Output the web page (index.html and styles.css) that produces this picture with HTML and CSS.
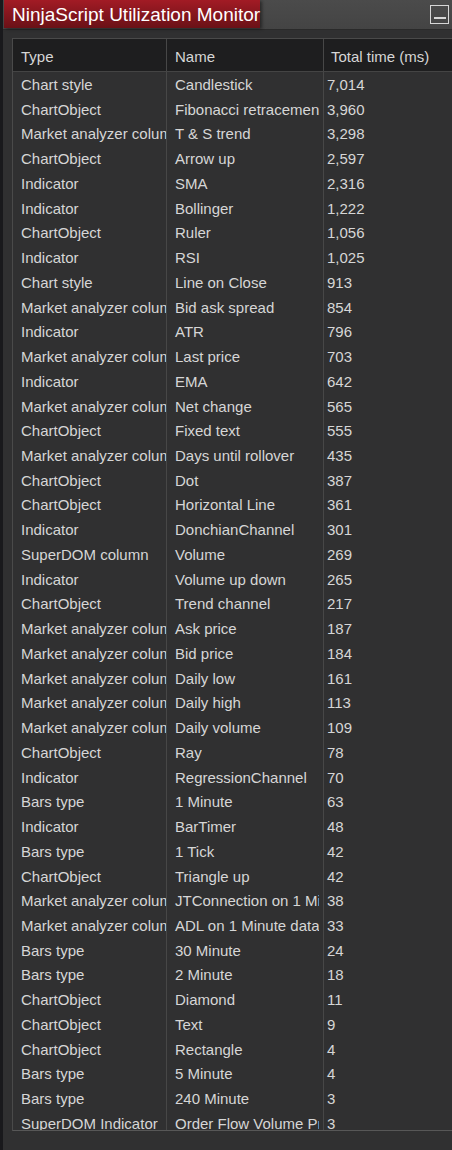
FILE: index.html
```html
<!DOCTYPE html>
<html>
<head>
<meta charset="utf-8">
<link rel="stylesheet" href="styles.css">
</head>
<body>
<div class="window">
  <div class="titlebar">
    <div class="title-tab">NinjaScript Utilization Monitor</div>
    <div class="min-btn"><span class="min-line"></span></div>
  </div>
  <div class="content">
    <div class="grid">
      <div class="row head">
        <div class="cell c1">Type</div>
        <div class="cell c2">Name</div>
        <div class="cell c3">Total time (ms)</div>
      </div>
      <div class="rows">
        <div class="row"><div class="cell c1">Chart style</div><div class="cell c2">Candlestick</div><div class="cell c3">7,014</div></div>
        <div class="row"><div class="cell c1">ChartObject</div><div class="cell c2">Fibonacci retracements</div><div class="cell c3">3,960</div></div>
        <div class="row"><div class="cell c1">Market analyzer column</div><div class="cell c2">T &amp; S trend</div><div class="cell c3">3,298</div></div>
        <div class="row"><div class="cell c1">ChartObject</div><div class="cell c2">Arrow up</div><div class="cell c3">2,597</div></div>
        <div class="row"><div class="cell c1">Indicator</div><div class="cell c2">SMA</div><div class="cell c3">2,316</div></div>
        <div class="row"><div class="cell c1">Indicator</div><div class="cell c2">Bollinger</div><div class="cell c3">1,222</div></div>
        <div class="row"><div class="cell c1">ChartObject</div><div class="cell c2">Ruler</div><div class="cell c3">1,056</div></div>
        <div class="row"><div class="cell c1">Indicator</div><div class="cell c2">RSI</div><div class="cell c3">1,025</div></div>
        <div class="row"><div class="cell c1">Chart style</div><div class="cell c2">Line on Close</div><div class="cell c3">913</div></div>
        <div class="row"><div class="cell c1">Market analyzer column</div><div class="cell c2">Bid ask spread</div><div class="cell c3">854</div></div>
        <div class="row"><div class="cell c1">Indicator</div><div class="cell c2">ATR</div><div class="cell c3">796</div></div>
        <div class="row"><div class="cell c1">Market analyzer column</div><div class="cell c2">Last price</div><div class="cell c3">703</div></div>
        <div class="row"><div class="cell c1">Indicator</div><div class="cell c2">EMA</div><div class="cell c3">642</div></div>
        <div class="row"><div class="cell c1">Market analyzer column</div><div class="cell c2">Net change</div><div class="cell c3">565</div></div>
        <div class="row"><div class="cell c1">ChartObject</div><div class="cell c2">Fixed text</div><div class="cell c3">555</div></div>
        <div class="row"><div class="cell c1">Market analyzer column</div><div class="cell c2">Days until rollover</div><div class="cell c3">435</div></div>
        <div class="row"><div class="cell c1">ChartObject</div><div class="cell c2">Dot</div><div class="cell c3">387</div></div>
        <div class="row"><div class="cell c1">ChartObject</div><div class="cell c2">Horizontal Line</div><div class="cell c3">361</div></div>
        <div class="row"><div class="cell c1">Indicator</div><div class="cell c2">DonchianChannel</div><div class="cell c3">301</div></div>
        <div class="row"><div class="cell c1">SuperDOM column</div><div class="cell c2">Volume</div><div class="cell c3">269</div></div>
        <div class="row"><div class="cell c1">Indicator</div><div class="cell c2">Volume up down</div><div class="cell c3">265</div></div>
        <div class="row"><div class="cell c1">ChartObject</div><div class="cell c2">Trend channel</div><div class="cell c3">217</div></div>
        <div class="row"><div class="cell c1">Market analyzer column</div><div class="cell c2">Ask price</div><div class="cell c3">187</div></div>
        <div class="row"><div class="cell c1">Market analyzer column</div><div class="cell c2">Bid price</div><div class="cell c3">184</div></div>
        <div class="row"><div class="cell c1">Market analyzer column</div><div class="cell c2">Daily low</div><div class="cell c3">161</div></div>
        <div class="row"><div class="cell c1">Market analyzer column</div><div class="cell c2">Daily high</div><div class="cell c3">113</div></div>
        <div class="row"><div class="cell c1">Market analyzer column</div><div class="cell c2">Daily volume</div><div class="cell c3">109</div></div>
        <div class="row"><div class="cell c1">ChartObject</div><div class="cell c2">Ray</div><div class="cell c3">78</div></div>
        <div class="row"><div class="cell c1">Indicator</div><div class="cell c2">RegressionChannel</div><div class="cell c3">70</div></div>
        <div class="row"><div class="cell c1">Bars type</div><div class="cell c2">1 Minute</div><div class="cell c3">63</div></div>
        <div class="row"><div class="cell c1">Indicator</div><div class="cell c2">BarTimer</div><div class="cell c3">48</div></div>
        <div class="row"><div class="cell c1">Bars type</div><div class="cell c2">1 Tick</div><div class="cell c3">42</div></div>
        <div class="row"><div class="cell c1">ChartObject</div><div class="cell c2">Triangle up</div><div class="cell c3">42</div></div>
        <div class="row"><div class="cell c1">Market analyzer column</div><div class="cell c2">JTConnection on 1 Minute data</div><div class="cell c3">38</div></div>
        <div class="row"><div class="cell c1">Market analyzer column</div><div class="cell c2">ADL on 1 Minute data</div><div class="cell c3">33</div></div>
        <div class="row"><div class="cell c1">Bars type</div><div class="cell c2">30 Minute</div><div class="cell c3">24</div></div>
        <div class="row"><div class="cell c1">Bars type</div><div class="cell c2">2 Minute</div><div class="cell c3">18</div></div>
        <div class="row"><div class="cell c1">ChartObject</div><div class="cell c2">Diamond</div><div class="cell c3">11</div></div>
        <div class="row"><div class="cell c1">ChartObject</div><div class="cell c2">Text</div><div class="cell c3">9</div></div>
        <div class="row"><div class="cell c1">ChartObject</div><div class="cell c2">Rectangle</div><div class="cell c3">4</div></div>
        <div class="row"><div class="cell c1">Bars type</div><div class="cell c2">5 Minute</div><div class="cell c3">4</div></div>
        <div class="row"><div class="cell c1">Bars type</div><div class="cell c2">240 Minute</div><div class="cell c3">3</div></div>
        <div class="row"><div class="cell c1">SuperDOM Indicator</div><div class="cell c2">Order Flow Volume Profile</div><div class="cell c3">3</div></div>
      </div>
    </div>
  </div>
</div>
</body>
</html>
```
FILE: styles.css
```css
html, body {
  margin: 0;
  padding: 0;
  background: #19191c;
  overflow: hidden;
}
body {
  font-family: "Liberation Sans", Arial, sans-serif;
  color: #d6d6d6;
  width: 452px;
  height: 1150px;
}
.window {
  margin-left: 3px;
  height: 1150px;
  background: #303031;
  display: flex;
  flex-direction: column;
  overflow: hidden;
}
.titlebar {
  height: 29px;
  flex: none;
  display: flex;
  align-items: flex-start;
  justify-content: space-between;
  background: linear-gradient(#4b4b4b, #444444);
  border-bottom: 1px solid #2a2a2a;
}
.title-tab {
  margin-left: 1px;
  height: 28px;
  width: 256px;
  box-sizing: border-box;
  padding-left: 8px;
  background: linear-gradient(#a21b25, #6a1117);
  color: #ffffff;
  font-size: 19px;
  line-height: 29px;
  white-space: nowrap;
  box-shadow: 2px 1px 3px rgba(0,0,0,0.45);
}
.min-btn {
  margin-top: 5px;
  margin-right: 3px;
  width: 19px;
  height: 19px;
  box-sizing: border-box;
  border: 1px solid #d6d6d6;
  display: flex;
  align-items: flex-end;
  justify-content: center;
}
.min-line {
  display: block;
  width: 12px;
  height: 2px;
  background: #d6d6d6;
  margin-bottom: 4px;
}
.content {
  flex: 1;
  padding: 8px 0 0 9px;
  overflow: hidden;
}
.grid {
  width: 460px;
  height: 1093px;
  box-sizing: border-box;
  border-top: 1px solid #4a4a4a;
  border-left: 1px solid #4a4a4a;
  border-bottom: 1px solid #575757;
  overflow: hidden;
  display: flex;
  flex-direction: column;
}
.row {
  display: grid;
  grid-template-columns: 154px 156px 1fr;
  height: 24.74px;
  line-height: 26px;
  font-size: 15px;
}
.row.head {
  height: 32px;
  line-height: 35px;
  background: #1e1e1f;
  border-bottom: 1px solid #444;
  flex: none;
}
.rows {
  flex: 1;
  overflow: hidden;
}
.cell {
  white-space: nowrap;
  overflow: hidden;
  box-sizing: border-box;
}
.c1 {
  padding-left: 8px;
  border-right: 1px solid #474747;
}
.c2 {
  padding-left: 8px;
  clip-path: inset(0 4px 0 0);
}
.c3 {
  padding-left: 3px;
  border-left: 1px solid #474747;
}
.head .c3 {
  padding-left: 7px;
}
```
